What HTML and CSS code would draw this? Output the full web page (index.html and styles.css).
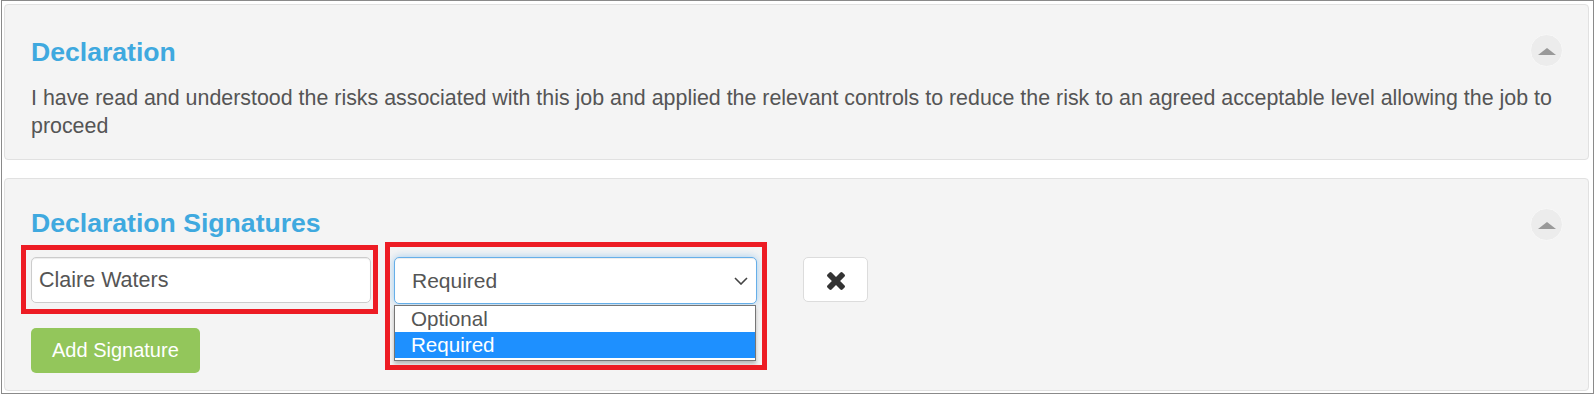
FILE: index.html
```html
<!DOCTYPE html>
<html lang="en">
<head>
  <meta charset="UTF-8" />
  <meta name="viewport" content="width=device-width, initial-scale=1.0" />
  <title>Declaration</title>
  <link rel="stylesheet" href="styles.css">
</head>
<body>
  <div class="frame">
    <section class="panel">
      <div class="panel-head">
        <h3 class="panel-title">Declaration</h3>
        <button class="collapse-btn" type="button"><span class="caret-up"></span></button>
      </div>
      <p class="declaration-text">I have read and understood the risks associated with this job and applied the relevant controls to reduce the risk to an agreed acceptable level allowing the job to proceed</p>
    </section>

    <section class="panel panel-signatures">
      <div class="panel-head">
        <h3 class="panel-title">Declaration Signatures</h3>
        <button class="collapse-btn" type="button"><span class="caret-up"></span></button>
      </div>
      <div class="signature-row">
        <div class="field field-name">
          <input class="form-control" type="text" value="Claire Waters">
        </div>
        <div class="field field-type">
          <div class="select-box">
            <span>Required</span>
            <svg class="chevron" width="14" height="8" viewBox="0 0 14 8"><path d="M1 1l6 6 6-6" fill="none" stroke="#444" stroke-width="1.6"/></svg>
          </div>
          <ul class="select-list">
            <li>Optional</li>
            <li class="selected">Required</li>
          </ul>
        </div>
        <button class="btn-remove" type="button">
          <svg width="18" height="18" viewBox="302 366 1188 1188"><path fill="#333" d="M1490 1322q0 40-28 68l-136 136q-28 28-68 28t-68-28l-294-294-294 294q-28 28-68 28t-68-28l-136-136q-28-28-28-68t28-68l294-294-294-294q-28-28-28-68t28-68l136-136q28-28 68-28t68 28l294 294 294-294q28-28 68-28t68 28l136 136q28 28 28 68t-28 68l-294 294 294 294q28 28 28 68z"/></svg>
        </button>
      </div>
      <button class="btn-add" type="button">Add Signature</button>
    </section>
  </div>
</body>
</html>
```

FILE: styles.css
```css
body {
  margin: 0;
  background-color: #fff;
  font-family: "Liberation Sans", Arial, sans-serif;
  color: #555;
}

.frame {
  margin: 0 2px 0 1px;
  border: 1px solid #8a8a8a;
  padding: 3px 4px 2px 2px;
}

.panel {
  background-color: #f4f4f4;
  border: 1px solid #e1e1e1;
  border-radius: 4px;
  padding: 29px 25px 19px 26px;
}

.panel-signatures {
  margin-top: 18px;
  padding-bottom: 17px;
}

.panel-head {
  display: flex;
  justify-content: space-between;
  align-items: flex-start;
  margin-bottom: 17px;
}

.panel-title {
  margin: 3px 0 0;
  font-size: 26.6px;
  line-height: 30px;
  font-weight: bold;
  color: #3fa9df;
}

.panel-signatures .panel-title {
  margin-top: 0;
}

.collapse-btn {
  width: 33px;
  height: 33px;
  padding: 0;
  border: 1px solid #f8f8f8;
  border-radius: 50%;
  background-color: #ececec;
  display: flex;
  justify-content: center;
  align-items: center;
}

.caret-up {
  width: 0;
  height: 0;
  border-left: 9px solid transparent;
  border-right: 9px solid transparent;
  border-bottom: 7px solid #999;
  margin-top: 1px;
}

.declaration-text {
  margin: 0;
  font-size: 21.4px;
  line-height: 28px;
}

.signature-row {
  display: flex;
  align-items: flex-start;
  margin-top: -1px;
}

.field {
  position: relative;
}

.field::after {
  content: "";
  position: absolute;
  border: 5px solid #ed1c24;
  pointer-events: none;
}

.field-name::after {
  top: -12px;
  left: -10px;
  right: -7px;
  bottom: -11px;
}

.field-type {
  margin-left: 23px;
}

.field-type::after {
  top: -15px;
  left: -9px;
  right: -10px;
  bottom: -66px;
}

.form-control {
  display: block;
  box-sizing: border-box;
  width: 340px;
  height: 46px;
  padding: 0 7px;
  border: 1px solid #ccc;
  border-radius: 5px;
  background-color: #fff;
  box-shadow: inset 0 1px 1px rgba(0, 0, 0, 0.075);
  font-family: inherit;
  font-size: 21.5px;
  color: #555;
}

.select-box {
  box-sizing: border-box;
  width: 363px;
  height: 47px;
  padding: 0 8px 0 17px;
  border: 1px solid #66afe9;
  border-radius: 5px;
  background-color: #fff;
  box-shadow: inset 0 1px 1px rgba(0, 0, 0, 0.075), 0 0 8px rgba(102, 175, 233, 0.6);
  display: flex;
  justify-content: space-between;
  align-items: center;
  font-size: 21px;
  color: #555;
}

.select-list {
  position: absolute;
  top: 48px;
  left: 0;
  width: 362px;
  box-sizing: border-box;
  margin: 0;
  padding: 0 0 2px;
  list-style: none;
  background-color: #fff;
  border: 1px solid #767676;
  box-shadow: 0 3px 4px rgba(0, 0, 0, 0.25);
  font-size: 20.6px;
  line-height: 26px;
  color: #555;
}

.select-list li {
  padding-left: 16px;
}

.select-list .selected {
  background-color: #1e90ff;
  color: #fff;
}

.btn-remove {
  margin-left: 46px;
  width: 65px;
  height: 45px;
  padding: 2px 0 0;
  border: 1px solid #dcdcdc;
  border-radius: 5px;
  background-color: #fff;
  display: flex;
  justify-content: center;
  align-items: center;
}

.btn-add {
  display: block;
  margin-top: 24px;
  height: 45px;
  padding: 0 21px;
  border: none;
  border-radius: 5px;
  background-color: #93c65b;
  font-family: inherit;
  font-size: 20px;
  color: #fff;
}
```
